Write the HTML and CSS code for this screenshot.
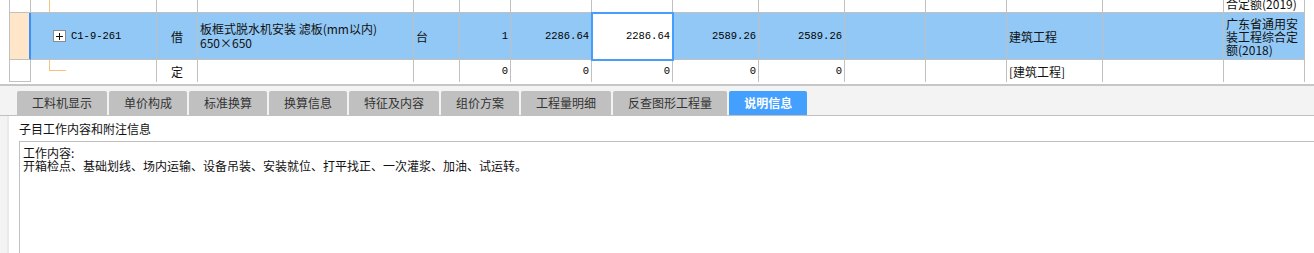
FILE: index.html
```html
<!DOCTYPE html>
<html lang="zh-CN">
<head>
<meta charset="utf-8">
<title>说明信息</title>
<link rel="stylesheet" href="styles.css">
</head>
<body>
<div class="app">
  <div class="grid">
    <div class="row r0">
      <div class="c gutter"></div>
      <div class="c rn"></div>
      <div class="c code tree-top"></div>
      <div class="c center"></div>
      <div class="c"></div>
      <div class="c"></div>
      <div class="c"></div>
      <div class="c"></div>
      <div class="c"></div>
      <div class="c"></div>
      <div class="c"></div>
      <div class="c"></div>
      <div class="c"></div>
      <div class="c"></div>
      <div class="c"></div>
      <div class="c wrap bottom">合定额(2019)</div>
      <div class="c fill"></div>
    </div>
    <div class="row r1">
      <div class="c gutter"></div>
      <div class="c rn"></div>
      <div class="c code"><span class="expander"></span><span class="mono">C1-9-261</span></div>
      <div class="c center">借</div>
      <div class="c wrap desc">板框式脱水机安装 滤板(mm以内)
650×650</div>
      <div class="c">台</div>
      <div class="c right mono">1</div>
      <div class="c right mono">2286.64</div>
      <div class="c right mono active">2286.64</div>
      <div class="c right mono">2589.26</div>
      <div class="c right mono">2589.26</div>
      <div class="c"></div>
      <div class="c"></div>
      <div class="c">建筑工程</div>
      <div class="c"></div>
      <div class="c wrap">广东省通用安装工程综合定额(2018)</div>
      <div class="c fill"></div>
    </div>
    <div class="row r2">
      <div class="c gutter"></div>
      <div class="c rn"></div>
      <div class="c code tree-end"></div>
      <div class="c center">定</div>
      <div class="c"></div>
      <div class="c"></div>
      <div class="c right mono">0</div>
      <div class="c right mono">0</div>
      <div class="c right mono">0</div>
      <div class="c right mono">0</div>
      <div class="c right mono">0</div>
      <div class="c"></div>
      <div class="c"></div>
      <div class="c">[建筑工程]</div>
      <div class="c"></div>
      <div class="c"></div>
      <div class="c fill"></div>
    </div>
  </div>

  <div class="tabbar">
    <div class="tab">工料机显示</div>
    <div class="tab">单价构成</div>
    <div class="tab">标准换算</div>
    <div class="tab">换算信息</div>
    <div class="tab">特征及内容</div>
    <div class="tab">组价方案</div>
    <div class="tab">工程量明细</div>
    <div class="tab">反查图形工程量</div>
    <div class="tab tab-active">说明信息</div>
  </div>

  <div class="panel">
    <div class="panel-title">子目工作内容和附注信息</div>
    <div class="note">工作内容:
开箱检点、基础划线、场内运输、设备吊装、安装就位、打平找正、一次灌浆、加油、试运转。</div>
  </div>
</div>
</body>
</html>
```

FILE: styles.css
```css
* {
  box-sizing: border-box;
}

html, body {
  margin: 0;
  padding: 0;
  background: #f3f3f3;
}

body {
  font-family: "Noto Sans CJK SC", "Microsoft YaHei", sans-serif;
  font-size: 12px;
  color: #111;
}

.app {
  width: 1314px;
  height: 253px;
  overflow: hidden;
  background: #f3f3f3;
}

/* ---------- grid ---------- */
.grid {
  background: #fff;
  padding-bottom: 2px;
}

.row {
  display: grid;
  grid-template-columns: 9px 22px 126px 41px 216px 46px 51px 81px 81px 86px 86px 81px 81px 96px 121px 81px 1fr;
}

.r0 { height: 13px; }
.r1 { height: 47px; background: #92c8f5; }
.r2 { height: 22px; }

.c {
  display: flex;
  align-items: center;
  padding: 0 2px;
  border-right: 1px solid #c0c0c0;
  border-bottom: 1px solid #c0c0c0;
  white-space: nowrap;
  overflow: hidden;
  font-size: 12px;
  line-height: 13px;
  color: #111;
}

.r2 .c {
  border-bottom: none;
}

.c.gutter,
.c.fill {
  border: none;
  background: #fff;
  padding: 0;
}

.c.rn {
  border-left: 1px solid #c0c0c0;
  background: #fff;
}

.r2 .c.rn {
  border-bottom: 1px solid #c0c0c0;
}

.r1 .c.rn {
  background: #ffe6c9;
  border-right-color: #3d8ef5;
  box-shadow: inset -1px 0 0 #3d8ef5;
}

.center {
  justify-content: center;
}

.right {
  justify-content: flex-end;
}

.mono {
  font-family: "Liberation Mono", "DejaVu Sans Mono", "Noto Sans CJK SC", monospace;
  font-size: 10.5px;
  color: #000;
}

.wrap {
  white-space: normal;
  word-break: break-all;
  padding-right: 1px;
}

.desc {
  white-space: pre-line;
  line-height: 14px;
}

.bottom {
  align-items: flex-end;
  padding-bottom: 2px;
}

.active {
  background: #fff;
  outline: 2px solid #459dfc;
  outline-offset: -1px;
  position: relative;
  z-index: 1;
}

/* tree lines */
.code {
  padding-left: 22px;
}

.tree-top {
  background: linear-gradient(#f8c27c, #f8c27c) no-repeat 18px 0 / 1px 100%;
}

.tree-end {
  background:
    linear-gradient(#f8c27c, #f8c27c) no-repeat 18px 0 / 1px 11px,
    linear-gradient(#f8c27c, #f8c27c) no-repeat 18px 10px / 17px 1px;
}

.expander {
  flex: none;
  width: 13px;
  height: 12px;
  margin-right: 5px;
  border: 1px solid #8c8c8c;
  background:
    linear-gradient(#111, #111) no-repeat center / 7px 1px,
    linear-gradient(#111, #111) no-repeat center / 1px 7px,
    #fff;
}

/* ---------- tabs ---------- */
.tabbar {
  display: flex;
  align-items: flex-end;
  gap: 2px;
  height: 32px;
  padding: 5px 0 0 17px;
  border-top: 2px solid #c6c6c6;
  border-bottom: 1px solid #c0c0c0;
  background: #f3f3f3;
}

.tab {
  height: 24px;
  padding: 0 15px;
  line-height: 24px;
  font-size: 12px;
  color: #333;
  background: #c0c0c0;
  border-radius: 2px 2px 0 0;
  white-space: nowrap;
}

.tab-active {
  background: #44a0ff;
  color: #fff;
  font-weight: bold;
}

/* ---------- panel ---------- */
.panel {
  height: 137px;
  margin-left: 7px;
  border-left: 2px solid #e9e9e9;
  background: #fff;
  display: flex;
  flex-direction: column;
}

.panel-title {
  height: 25px;
  line-height: 25px;
  padding-left: 10px;
  font-size: 12px;
  color: #111;
}

.note {
  flex: 1;
  margin-left: 10px;
  padding: 4px 3px;
  border-top: 1px solid #c0c0c0;
  border-left: 1px solid #c0c0c0;
  font-size: 12px;
  line-height: 13px;
  white-space: pre-line;
  color: #111;
}
```
